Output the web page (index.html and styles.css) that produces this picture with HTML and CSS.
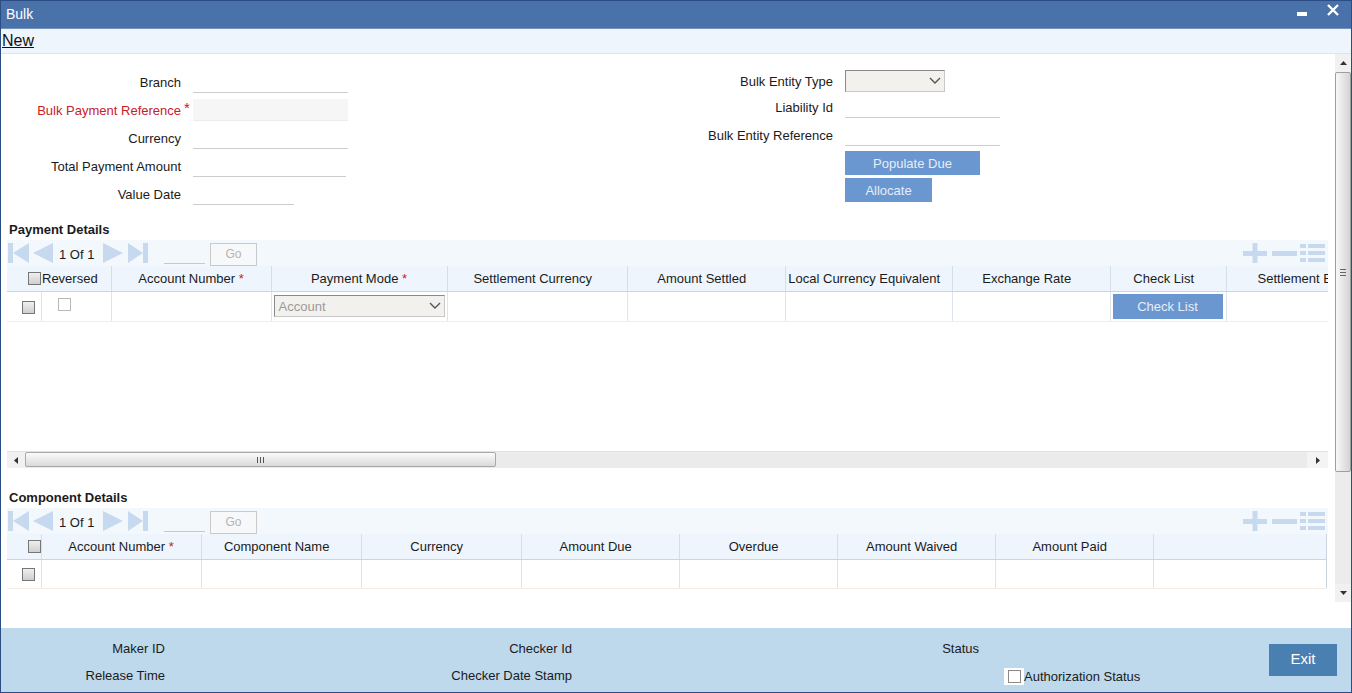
FILE: index.html
```html
<!DOCTYPE html>
<html>
<head>
<meta charset="utf-8">
<title>Bulk</title>
<link rel="stylesheet" href="styles.css">
</head>
<body>
<div class="window">
  <div class="titlebar">
    <span class="title">Bulk</span>
    <span class="winctl">
      <svg class="ic-min" width="10" height="12" viewBox="0 0 10 12"><rect x="0" y="8" width="10" height="4" fill="#fff"/></svg>
      <svg class="ic-close" width="12" height="12" viewBox="0 0 12 12"><path d="M1 1 L11 11 M11 1 L1 11" stroke="#fff" stroke-width="2.4"/></svg>
    </span>
  </div>
  <div class="toolbar"><a class="new">New</a></div>
  <div class="main">
    <div class="content">
      <div class="form">
        <div class="fcol-left">
          <div class="frow"><span class="flabel">Branch</span><span class="req"></span><span class="finput w155"></span></div>
          <div class="frow"><span class="flabel red">Bulk Payment Reference</span><span class="req">*</span><span class="finput w155 disabled"></span></div>
          <div class="frow"><span class="flabel">Currency</span><span class="req"></span><span class="finput w155"></span></div>
          <div class="frow"><span class="flabel">Total Payment Amount</span><span class="req"></span><span class="finput w153"></span></div>
          <div class="frow"><span class="flabel">Value Date</span><span class="req"></span><span class="finput w101"></span></div>
        </div>
        <div class="fcol-right">
          <div class="rrow r1"><span class="rlabel">Bulk Entity Type</span>
            <span class="select sel-entity"><svg class="chev" width="12" height="8" viewBox="0 0 12 8"><path d="M1 1 L6 6 L11 1" stroke="#555" stroke-width="1.4" fill="none"/></svg></span>
          </div>
          <div class="rrow r2"><span class="rlabel">Liability Id</span><span class="finput w155"></span></div>
          <div class="rrow r3"><span class="rlabel">Bulk Entity Reference</span><span class="finput w155"></span></div>
          <div class="rrow r4"><span class="rlabel"></span><button class="btn btn-pop">Populate Due</button></div>
          <div class="rrow r5"><span class="rlabel"></span><button class="btn btn-alloc">Allocate</button></div>
        </div>
      </div>

      <div class="section">
        <div class="sec-title">Payment Details</div>
        <div class="pager">
          <svg class="nav-l" width="46" height="20" viewBox="0 0 46 20"><rect x="0" y="0" width="5" height="20" fill="#c6d9ef"/><path d="M5 10 L21 0 L21 20 Z" fill="#c6d9ef"/><path d="M25 10 L45 0 L45 20 Z" fill="#c6d9ef"/></svg>
          <span class="pg-text">1 Of 1</span>
          <svg class="nav-r" width="46" height="20" viewBox="0 0 46 20"><path d="M0 0 L20 10 L0 20 Z" fill="#c6d9ef"/><path d="M25 0 L40 10 L25 20 Z" fill="#c6d9ef"/><rect x="40" y="0" width="5" height="20" fill="#c6d9ef"/></svg>
          <span class="pg-input"></span>
          <span class="go">Go</span>
          <span class="pg-actions">
            <svg width="82" height="20" viewBox="0 0 82 20"><rect x="0" y="8" width="24" height="5" fill="#c6d9ef"/><rect x="9.5" y="0" width="5" height="20" fill="#c6d9ef"/><rect x="29" y="8" width="25" height="5" fill="#c6d9ef"/><rect x="57" y="1" width="6" height="4" fill="#c6d9ef"/><rect x="65" y="1" width="17" height="4" fill="#c6d9ef"/><rect x="57" y="8" width="6" height="4" fill="#c6d9ef"/><rect x="65" y="8" width="17" height="4" fill="#c6d9ef"/><rect x="57" y="15" width="6" height="4" fill="#c6d9ef"/><rect x="65" y="15" width="17" height="4" fill="#c6d9ef"/></svg>
          </span>
        </div>
        <div class="tablewrap">
          <table class="grid pay">
            <colgroup><col style="width:34px"><col style="width:70px"><col style="width:160px"><col style="width:176px"><col style="width:180px"><col style="width:158px"><col style="width:167px"><col style="width:158px"><col style="width:116px"><col style="width:160px"></colgroup>
            <thead>
              <tr>
                <th colspan="2" class="th-first"><span class="cb cb-h"></span><span class="rev">Reversed</span></th>
                <th>Account Number <span class="star">*</span></th>
                <th>Payment Mode <span class="star">*</span></th>
                <th>Settlement Currency <span class="star hid">*</span></th>
                <th>Amount Settled <span class="star hid">*</span></th>
                <th>Local Currency Equivalent <span class="star hid">*</span></th>
                <th>Exchange Rate <span class="star hid">*</span></th>
                <th>Check List <span class="star hid">*</span></th>
                <th class="th-clip"><span class="clip">Settlement Branch</span></th>
              </tr>
            </thead>
            <tbody>
              <tr>
                <td class="td-cb"><span class="cb cb-row"></span></td>
                <td class="td-rev"><span class="cbw"></span></td>
                <td></td>
                <td class="td-sel"><span class="select sel-mode"><span class="sel-text">Account</span><svg class="chev" width="12" height="8" viewBox="0 0 12 8"><path d="M1 1 L6 6 L11 1" stroke="#555" stroke-width="1.4" fill="none"/></svg></span></td>
                <td></td>
                <td></td>
                <td></td>
                <td></td>
                <td class="td-btn"><button class="btn btn-check">Check List</button></td>
                <td></td>
              </tr>
            </tbody>
          </table>
        </div>
        <div class="hscroll">
          <span class="hs-left"><svg width="4" height="7" viewBox="0 0 4 7"><path d="M4 0 L0 3.5 L4 7 Z" fill="#333"/></svg></span>
          <span class="hs-thumb"><svg width="7" height="6" viewBox="0 0 7 6"><path d="M0.5 0 V6 M3.5 0 V6 M6.5 0 V6" stroke="#555" stroke-width="1"/></svg></span>
          <span class="hs-track"></span>
          <span class="hs-right"><svg width="4" height="7" viewBox="0 0 4 7"><path d="M0 0 L4 3.5 L0 7 Z" fill="#333"/></svg></span>
        </div>
      </div>

      <div class="section comp">
        <div class="sec-title">Component Details</div>
        <div class="pager">
          <svg class="nav-l" width="46" height="20" viewBox="0 0 46 20"><rect x="0" y="0" width="5" height="20" fill="#c6d9ef"/><path d="M5 10 L21 0 L21 20 Z" fill="#c6d9ef"/><path d="M25 10 L45 0 L45 20 Z" fill="#c6d9ef"/></svg>
          <span class="pg-text">1 Of 1</span>
          <svg class="nav-r" width="46" height="20" viewBox="0 0 46 20"><path d="M0 0 L20 10 L0 20 Z" fill="#c6d9ef"/><path d="M25 0 L40 10 L25 20 Z" fill="#c6d9ef"/><rect x="40" y="0" width="5" height="20" fill="#c6d9ef"/></svg>
          <span class="pg-input"></span>
          <span class="go">Go</span>
          <span class="pg-actions">
            <svg width="82" height="20" viewBox="0 0 82 20"><rect x="0" y="8" width="24" height="5" fill="#c6d9ef"/><rect x="9.5" y="0" width="5" height="20" fill="#c6d9ef"/><rect x="29" y="8" width="25" height="5" fill="#c6d9ef"/><rect x="57" y="1" width="6" height="4" fill="#c6d9ef"/><rect x="65" y="1" width="17" height="4" fill="#c6d9ef"/><rect x="57" y="8" width="6" height="4" fill="#c6d9ef"/><rect x="65" y="8" width="17" height="4" fill="#c6d9ef"/><rect x="57" y="15" width="6" height="4" fill="#c6d9ef"/><rect x="65" y="15" width="17" height="4" fill="#c6d9ef"/></svg>
          </span>
        </div>
        <table class="grid cmp">
          <colgroup><col style="width:34px"><col style="width:160px"><col style="width:160px"><col style="width:160px"><col style="width:158px"><col style="width:158px"><col style="width:158px"><col style="width:158px"><col style="width:173px"></colgroup>
          <thead>
            <tr>
              <th class="th-cb"><span class="cb"></span></th>
              <th>Account Number <span class="star">*</span></th>
              <th>Component Name <span class="star hid">*</span></th>
              <th>Currency <span class="star hid">*</span></th>
              <th>Amount Due <span class="star hid">*</span></th>
              <th>Overdue <span class="star hid">*</span></th>
              <th>Amount Waived <span class="star hid">*</span></th>
              <th>Amount Paid <span class="star hid">*</span></th>
              <th class="last"></th>
            </tr>
          </thead>
          <tbody>
            <tr>
              <td class="td-cb"><span class="cb cb-row2"></span></td>
              <td></td><td></td><td></td><td></td><td></td><td></td><td></td><td class="last"></td>
            </tr>
          </tbody>
        </table>
      </div>
    </div>
    <div class="vscroll">
      <span class="vs-up"><svg width="7" height="4" viewBox="0 0 7 4"><path d="M0 4 L3.5 0 L7 4 Z" fill="#333"/></svg></span>
      <span class="vs-thumb"><svg width="6" height="7" viewBox="0 0 6 7"><path d="M0 0.5 H6 M0 3.5 H6 M0 6.5 H6" stroke="#666" stroke-width="1"/></svg></span>
      <span class="vs-track"></span>
      <span class="vs-down"><svg width="7" height="4" viewBox="0 0 7 4"><path d="M0 0 L3.5 4 L7 0 Z" fill="#333"/></svg></span>
    </div>
  </div>
  <div class="footer">
    <div class="finfo">
      <div class="fcell"><span class="ftlabel">Maker ID</span></div>
      <div class="fcell"><span class="ftlabel">Checker Id</span></div>
      <div class="fcell"><span class="ftlabel">Status</span></div>
      <div class="fcell"><span class="ftlabel">Release Time</span></div>
      <div class="fcell"><span class="ftlabel">Checker Date Stamp</span></div>
      <div class="fcell auth"><span class="ftlabel"></span><span class="authbox"><span class="cbw cb-auth"></span></span><span class="authtext">Authorization Status</span></div>
    </div>
    <button class="exit">Exit</button>
  </div>
</div>
</body>
</html>
```

FILE: styles.css
```css
* { box-sizing: border-box; }
body {
  margin: 0;
  font-family: "Liberation Sans", Arial, sans-serif;
  font-size: 13px;
  color: #1b1b1b;
  background: #fff;
}
.window {
  width: 1352px;
  height: 693px;
  border: 1px solid #2c4d84;
  display: flex;
  flex-direction: column;
  overflow: hidden;
}
.titlebar {
  height: 28px;
  flex: none;
  background: #4a72aa;
  border-bottom: 1px solid #7591b9;
  display: flex;
  justify-content: space-between;
  align-items: flex-start;
  color: #fff;
}
.title {
  font-size: 14px;
  line-height: 26px;
  padding-left: 5px;
}
.winctl {
  display: flex;
  align-items: flex-start;
  gap: 20px;
  padding-top: 3px;
  margin-right: 12px;
}
.winctl svg { display: block; }
.toolbar {
  height: 25px;
  flex: none;
  background: #eef5fd;
  border-bottom: 1px solid #dfe4ea;
  display: flex;
  align-items: center;
}
.new {
  font-size: 16px;
  color: #111;
  text-decoration: underline;
  padding-left: 1px;
  line-height: 22px;
}
.main {
  height: 574px;
  flex: none;
  display: flex;
}
.content {
  width: 1334px;
  display: flex;
  flex-direction: column;
}
/* form */
.form {
  display: flex;
  padding: 16px 0 15px;
}
.fcol-left {
  width: 600px;
  display: flex;
  flex-direction: column;
  gap: 6px;
  margin-top: 1px;
}
.frow {
  display: flex;
  align-items: center;
  height: 22px;
}
.flabel {
  width: 180px;
  text-align: right;
}
.red { color: #c8202a; }
.req {
  width: 12px;
  color: #c8202a;
  font-size: 15px;
  padding-left: 3px;
  padding-top: 0;
  align-self: flex-start;
  line-height: 18px;
}
.finput {
  display: block;
  height: 22px;
  border-bottom: 1px solid #cdcdcd;
}
.finput.disabled {
  background: #f6f6f6;
  border-bottom: 1px solid #ececec;
}
.w155 { width: 155px; }
.w153 { width: 153px; }
.w101 { width: 101px; }
.fcol-right {
  display: flex;
  flex-direction: column;
}
.rrow {
  display: flex;
  align-items: center;
}
.rlabel {
  width: 232px;
  text-align: right;
  margin-right: 12px;
}
.r2 { margin-top: 4px; }
.r3 { margin-top: 6px; }
.r4 { margin-top: 5px; }
.r5 { margin-top: 3px; }
.select {
  display: flex;
  align-items: center;
  justify-content: space-between;
  height: 22px;
  background: #f2f1ee;
  border: 1px solid #c8c8c8;
  border-top-color: #8a8a8a;
  border-left-color: #8a8a8a;
}
.sel-entity { width: 100px; justify-content: flex-end; padding-right: 3px; }
.chev { display: block; }
.btn {
  font-family: "Liberation Sans", Arial, sans-serif;
  font-size: 13px;
  background: #6b97d0;
  color: #e6edf7;
  border: 0;
  height: 24px;
  padding: 0;
}
.btn-pop { width: 135px; }
.btn-alloc { width: 87px; }
/* sections */
.section {
  margin: 0 7px 0 6px;
}
.sec-title {
  font-weight: bold;
  height: 18px;
  line-height: 20px;
  padding-left: 2px;
  margin-bottom: 2px;
}
.comp { margin-top: 20px; }
.pager {
  height: 26px;
  background: #f3f8fd;
  display: flex;
  align-items: center;
}
.pager svg { display: block; }
.nav-l { margin-left: 1px; }
.pg-text { margin-left: 5px; width: 39px; padding-top: 2px; }
.nav-r { margin-left: 5px; }
.pg-input {
  width: 41px;
  height: 22px;
  margin-left: 15px;
  border-bottom: 1px solid #c8c8c8;
}
.go {
  width: 47px;
  height: 23px;
  margin-left: 5px;
  margin-top: 2px;
  border: 1px solid #cacaca;
  background: #f7f8f9;
  color: #b4b4b4;
  font-size: 12px;
  display: flex;
  align-items: center;
  justify-content: center;
}
.pg-actions {
  margin-left: auto;
  margin-right: 3px;
}
.tablewrap {
  height: 185px;
  overflow: hidden;
}
.grid {
  border-collapse: collapse;
  table-layout: fixed;
}
.grid.pay { width: 1379px; }
.grid.cmp { width: 1319px; }
.grid th {
  height: 25px;
  padding: 0;
  background: #eef5fd;
  font-weight: normal;
  text-align: center;
  border-right: 1px solid #d5dfea;
  border-bottom: 1px solid #c9d5e3;
  white-space: nowrap;
  overflow: hidden;
}
.grid td {
  padding: 0;
  border-right: 1px solid #dde4ec;
  border-bottom: 1px solid #f3ebe5;
}
.pay td { height: 30px; }
.cmp td { height: 29px; }
.grid .last { border-right: 1px solid #c9d3df; }
.star { color: #c8202a; }
.star.hid { visibility: hidden; }
.th-first {
  text-align: left !important;
}
.th-first .cb { margin-left: 21px; vertical-align: -2px; }
.rev { margin-left: 1px; }
.grid th.th-clip { text-align: left; }
.clip {
  display: block;
  width: 70px;
  margin-left: 31px;
  overflow: hidden;
  white-space: nowrap;
}
.cb {
  display: inline-block;
  width: 13px;
  height: 13px;
  border: 1px solid #767676;
  background: linear-gradient(#efefef, #cfcfcf);
}
.cbw {
  display: inline-block;
  width: 13px;
  height: 13px;
  border: 1px solid #b8b8b8;
  background: #fff;
}
.grid .td-cb { vertical-align: top; padding-left: 15px; }
.td-cb .cb-row { margin-top: 9px; display: block; }
.td-rev { vertical-align: top; }
.td-rev .cbw { margin-top: 6px; margin-left: 16px; }
.grid .td-sel { padding: 0 2px; }
.sel-mode { width: 171px; padding: 0 3px 0 4px; }
.sel-text { color: #9a9a9a; }
.grid .td-btn { padding: 0 2px; }
.btn-check { width: 110px; height: 25px; display: block; }
.grid th.th-cb { text-align: left; padding-left: 21px; }
.th-cb .cb { vertical-align: -2px; }
.cmp .td-cb .cb-row2 { margin-top: 8px; display: block; }
/* horizontal scrollbar */
.hscroll {
  height: 17px;
  display: flex;
  background: #ebebeb;
  border-top: 1px solid #e2e2e2;
}
.hs-left {
  width: 18px;
  display: flex;
  align-items: center;
  justify-content: center;
  background: #f1f1f1;
}
.hs-thumb {
  width: 471px;
  height: 15px;
  border: 1px solid #a9a9a9;
  border-radius: 2px;
  background: linear-gradient(#fbfbfb, #dadada);
  display: flex;
  align-items: center;
  justify-content: center;
}
.hs-track { flex: 1; }
.hs-right {
  width: 21px;
  display: flex;
  align-items: center;
  justify-content: center;
  background: #f4f4f4;
}
/* vertical scrollbar */
.vscroll {
  width: 16px;
  height: 548px;
  display: flex;
  flex-direction: column;
  background: #ececec;
}
.vs-up, .vs-down {
  height: 18px;
  flex: none;
  display: flex;
  align-items: center;
  justify-content: center;
  background: #f1f1f1;
}
.vs-thumb {
  height: 400px;
  flex: none;
  border: 1px solid #9e9e9e;
  border-radius: 2px;
  background: linear-gradient(90deg, #f8f8f8, #d4d4d4);
  display: flex;
  align-items: center;
  justify-content: center;
}
.vs-track { flex: 1; }
/* footer */
.footer {
  height: 64px;
  flex: none;
  background: #bed8ec;
  display: flex;
  align-items: flex-start;
}
.finfo {
  display: grid;
  grid-template-columns: 407px 407px 407px;
  grid-template-rows: 20px 20px;
  row-gap: 7px;
  padding-top: 10px;
}
.fcell {
  display: flex;
  align-items: center;
}
.ftlabel {
  width: 164px;
  text-align: right;
}
.authbox {
  margin-left: 25px;
  width: 20px;
  height: 17px;
  margin-top: 2px;
  background: #fff;
  display: flex;
  align-items: center;
  justify-content: center;
}
.cb-auth { width: 13px; height: 13px; border-color: #8a8a8a; }
.authtext { margin-top: 3px; }
.exit {
  margin-left: 47px;
  margin-top: 16px;
  width: 68px;
  height: 32px;
  background: #4a80b1;
  color: #fff;
  border: 0;
  font-family: "Liberation Sans", Arial, sans-serif;
  font-size: 15px;
  padding: 0 0 3px;
}
```
